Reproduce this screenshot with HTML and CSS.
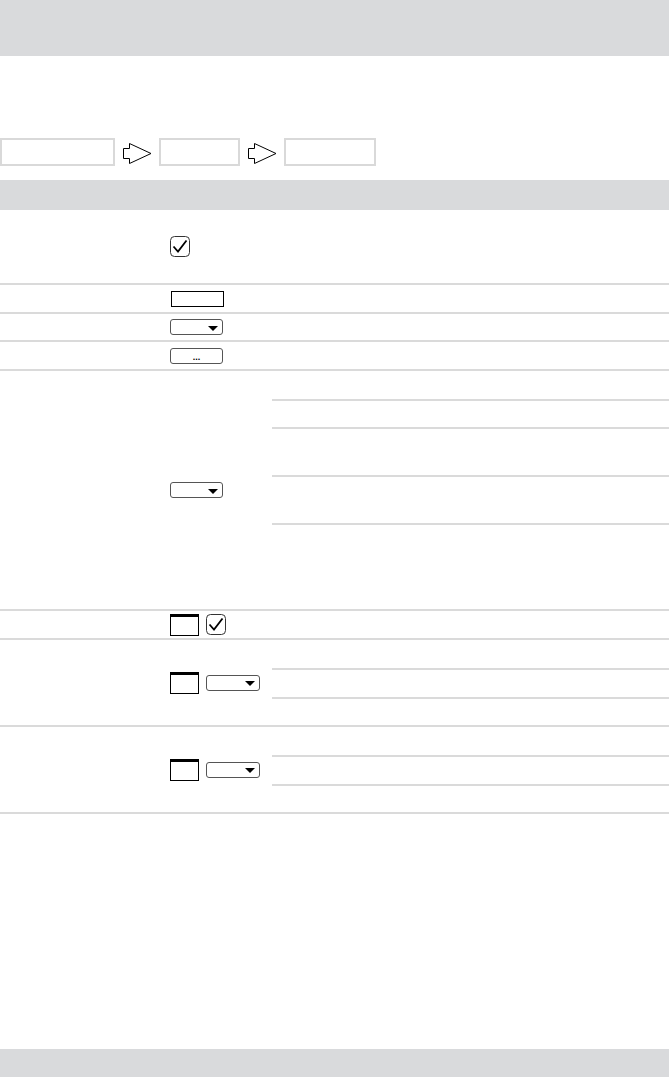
FILE: index.html
```html
<!DOCTYPE html>
<html>
<head>
<meta charset="utf-8">
<link rel="stylesheet" href="styles.css">
</head>
<body>
<div class="page">
  <header class="topbar"></header>

  <nav class="crumbs">
    <div class="crumb crumb-a"></div>
    <svg class="arrow" width="29" height="21" viewBox="0 0 29 21"><path d="M0.5 5.5H6.5V0.5L28 10.5L6.5 20.5V15.5H0.5Z" fill="#fff" stroke="#000" stroke-width="1"/></svg>
    <div class="crumb crumb-b"></div>
    <svg class="arrow" width="29" height="21" viewBox="0 0 29 21"><path d="M0.5 5.5H6.5V0.5L28 10.5L6.5 20.5V15.5H0.5Z" fill="#fff" stroke="#000" stroke-width="1"/></svg>
    <div class="crumb crumb-c"></div>
  </nav>

  <div class="section-bar"></div>

  <div class="table">
    <div class="row h73">
      <div class="label"></div>
      <div class="ctrl">
        <svg class="chk" width="20" height="21" viewBox="0 0 20 21"><rect x="0.5" y="0.5" width="19" height="20" rx="4" fill="#fff" stroke="#333"/><path d="M3.5 10.5L8 15.5L16.5 4.5" fill="none" stroke="#000" stroke-width="1.8"/></svg>
      </div>
      <div class="sub"></div>
    </div>

    <div class="row h27">
      <div class="label"></div>
      <div class="ctrl"><span class="textbox"></span></div>
      <div class="sub"></div>
    </div>

    <div class="row h26">
      <div class="label"></div>
      <div class="ctrl"><span class="select"><span class="caret"></span></span></div>
      <div class="sub"></div>
    </div>

    <div class="row h27">
      <div class="label"></div>
      <div class="ctrl"><span class="button">...</span></div>
      <div class="sub"></div>
    </div>

    <div class="row h238">
      <div class="label"></div>
      <div class="ctrl"><span class="select"><span class="caret"></span></span></div>
      <div class="sub">
        <div class="item i28"></div>
        <div class="item i26"></div>
        <div class="item i46"></div>
        <div class="item i46"></div>
        <div class="item last"></div>
      </div>
    </div>

    <div class="row h27">
      <div class="label"></div>
      <div class="ctrl">
        <span class="win"></span>
        <svg class="chk" width="20" height="21" viewBox="0 0 20 21"><rect x="0.5" y="0.5" width="19" height="20" rx="4" fill="#fff" stroke="#333"/><path d="M3.5 10.5L8 15.5L16.5 4.5" fill="none" stroke="#000" stroke-width="1.8"/></svg>
      </div>
      <div class="sub"></div>
    </div>

    <div class="row h85">
      <div class="label"></div>
      <div class="ctrl">
        <span class="win"></span>
        <span class="select wide"><span class="caret"></span></span>
      </div>
      <div class="sub">
        <div class="item i28"></div>
        <div class="item i27"></div>
        <div class="item last"></div>
      </div>
    </div>

    <div class="row h85">
      <div class="label"></div>
      <div class="ctrl">
        <span class="win"></span>
        <span class="select wide"><span class="caret"></span></span>
      </div>
      <div class="sub">
        <div class="item i28"></div>
        <div class="item i27"></div>
        <div class="item last"></div>
      </div>
    </div>
  </div>

  <footer class="footer"></footer>
</div>
</body>
</html>
```

FILE: styles.css
```css
html, body {
  margin: 0;
  padding: 0;
  background: #fff;
  font-family: "Liberation Sans", Arial, sans-serif;
}

.page {
  width: 669px;
  min-height: 1077px;
  display: flex;
  flex-direction: column;
}

.topbar {
  height: 56px;
  background: #d9dadc;
}

.crumbs {
  margin-top: 82px;
  height: 28px;
  display: flex;
  align-items: center;
  gap: 7px;
}

.crumb {
  box-sizing: border-box;
  height: 28px;
  border: 2px solid #d9d9d9;
  background: #fff;
}
.crumb-a { width: 115px; margin-right: 1px; }
.crumb-b { width: 81px; margin-right: 1px; }
.crumb-c { width: 92px; }

.arrow {
  display: block;
  flex: none;
  margin-top: 2px;
}

.section-bar {
  margin-top: 14px;
  height: 30px;
  background: #d9dadc;
}

.table {
  display: flex;
  flex-direction: column;
}

.row {
  display: grid;
  grid-template-columns: 170px 102px 1fr;
  border-bottom: 2px solid #dadada;
}
.h26 { height: 26px; }
.h27 { height: 27px; }
.h73 { height: 73px; }
.h85 { height: 85px; }
.h238 { height: 238px; }

.ctrl {
  display: flex;
  align-items: center;
  gap: 7px;
}

.chk { display: block; flex: none; }

.textbox {
  box-sizing: border-box;
  width: 53px;
  height: 16px;
  border: 1.5px solid #000;
  margin-left: 1px;
}

.select, .button {
  box-sizing: border-box;
  width: 53px;
  height: 16px;
  border: 1px solid #555;
  border-radius: 3px;
  display: flex;
  background: #fff;
}
.select.wide { width: 54px; }

.select {
  justify-content: flex-end;
  align-items: center;
  padding: 2px 4px 0 0;
}

.caret {
  width: 0;
  height: 0;
  border-left: 5px solid transparent;
  border-right: 5px solid transparent;
  border-top: 5px solid #000;
}

.button {
  justify-content: center;
  align-items: flex-end;
  font-size: 9px;
  line-height: 9px;
  font-weight: bold;
  color: #000;
  padding-bottom: 1px;
}

.win {
  box-sizing: border-box;
  width: 29px;
  height: 22px;
  border: 1px solid #000;
  border-top: 3px solid #000;
  flex: none;
}

.sub {
  display: flex;
  flex-direction: column;
}

.item {
  border-bottom: 2px solid #dadada;
}
.item.i26 { height: 26px; }
.item.i27 { height: 27px; }
.item.i28 { height: 28px; }
.item.i46 { height: 46px; }
.item.last { flex: 1; border-bottom: none; }

.footer {
  margin-top: auto;
  height: 28px;
  background: #d9dadc;
}
```
